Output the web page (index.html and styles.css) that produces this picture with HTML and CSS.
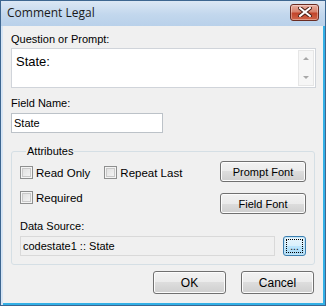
FILE: index.html
```html
<!DOCTYPE html>
<html lang="en">
<head>
    <meta charset="UTF-8">
    <title>Comment Legal</title>
    <link rel="stylesheet" href="styles.css">
</head>
<body>
    <div class="window">
        <div class="titlebar">
            <span class="title">Comment Legal</span>
            <span class="close">
                <svg width="14" height="10" viewBox="0 0 14 10">
                    <path d="M2 1 L12 9 M12 1 L2 9" stroke="#4a1e16" stroke-width="4" stroke-linecap="square"/>
                    <path d="M2 1 L12 9 M12 1 L2 9" stroke="#ffffff" stroke-width="2" stroke-linecap="square"/>
                </svg>
            </span>
        </div>

        <div class="client">
            <div class="label">Question or Prompt:</div>
            <div class="memo">
                <div class="memo-text">State:</div>
                <div class="vscroll">
                    <span class="arrow up"></span>
                    <span class="arrow down"></span>
                </div>
            </div>

            <div class="label field-label">Field Name:</div>
            <div class="textbox">State</div>

            <fieldset class="group">
                <legend>Attributes</legend>
                <div class="attrs">
                    <div class="checks">
                        <div class="check-row">
                            <label class="check"><span class="box"></span>Read Only</label>
                            <label class="check"><span class="box"></span>Repeat Last</label>
                        </div>
                        <div class="check-row">
                            <label class="check"><span class="box"></span>Required</label>
                        </div>
                    </div>
                    <div class="font-buttons">
                        <button class="btn font-btn">Prompt Font</button>
                        <button class="btn font-btn">Field Font</button>
                    </div>
                </div>
                <div class="label source-label">Data Source:</div>
                <div class="source-row">
                    <div class="textbox readonly">codestate1 :: State</div>
                    <button class="btn browse"><span class="focus">...</span></button>
                </div>
            </fieldset>

            <div class="actions">
                <button class="btn action">OK</button>
                <button class="btn action">Cancel</button>
            </div>
        </div>
    </div>
</body>
</html>
```

FILE: styles.css
```css
body {
    margin: 0;
    font-family: "Liberation Sans", Arial, sans-serif;
    font-size: 11px;
    color: #000;
}
.window {
    width: 326px;
    height: 306px;
    box-sizing: border-box;
    border: 1px solid #3d6690;
    padding: 0 2px 2px 2px;
    background: #f0f0f0;
    box-shadow: inset 2px 0 0 #d6e5f5, inset -2px -2px 0 #33b0e6;
    display: flex;
    flex-direction: column;
}
.titlebar {
    height: 25px;
    margin: 0 -2px;
    padding: 0 6px;
    display: flex;
    align-items: center;
    justify-content: space-between;
    background: linear-gradient(#dbe7f4, #c2d7ed 55%, #b9d1ea);
}
.title {
    font-family: "Open Sans", "Noto Sans", sans-serif;
    font-size: 12px;
    color: #1a1a1a;
    margin-top: -2px;
}
.close {
    width: 27px;
    height: 15px;
    margin-top: -3px;
    border: 1px solid #6a2c22;
    border-radius: 3px;
    background: linear-gradient(#eab0a2, #d7826d 45%, #c2452b 55%, #d0664a);
    box-shadow: inset 0 0 0 1px rgba(255, 255, 255, 0.35);
    display: flex;
    align-items: center;
    justify-content: center;
}
.client {
    flex: 1;
    padding: 7px 0 0 8px;
}
.label {
    line-height: 13px;
    height: 13px;
}
.memo {
    margin-top: 2px;
    width: 305px;
    height: 40px;
    box-sizing: border-box;
    border: 1px solid #d0d4da;
    background: #fff;
    display: flex;
}
.memo-text {
    flex: 1;
    padding: 5px 0 0 4px;
    font-size: 13px;
    line-height: 16px;
}
.vscroll {
    width: 16px;
    margin: 1px 1px 1px 0;
    background: #f6f6f6;
    border: 1px solid #e6e6e6;
    box-sizing: border-box;
    display: flex;
    flex-direction: column;
    align-items: center;
    justify-content: space-between;
    padding: 6px 0 6px;
}
.arrow {
    width: 0;
    height: 0;
    border-left: 3px solid transparent;
    border-right: 3px solid transparent;
}
.arrow.up {
    border-bottom: 3px solid #a8a8a8;
}
.arrow.down {
    border-top: 3px solid #a8a8a8;
}
.field-label {
    margin-top: 9px;
}
.textbox {
    margin-top: 3px;
    width: 152px;
    height: 20px;
    box-sizing: border-box;
    border: 1px solid #bcc2c8;
    background: #fff;
    padding: 0 2px;
    line-height: 18px;
}
.group {
    margin: 12px 0 0 0;
    width: 304px;
    box-sizing: border-box;
    border: 1px solid #d5dfe5;
    border-radius: 3px;
    padding: 3px 8px 8px 8px;
}
.group legend {
    padding: 0 1px;
    margin-left: 6px;
    line-height: 13px;
}
.attrs {
    display: flex;
    justify-content: space-between;
}
.checks {
    padding-top: 5px;
    display: flex;
    flex-direction: column;
    gap: 12px;
}
.check-row {
    display: flex;
    gap: 14px;
}
.check {
    display: flex;
    align-items: center;
    gap: 3px;
    height: 13px;
    font-size: 11.5px;
}
.box {
    width: 13px;
    height: 13px;
    box-sizing: border-box;
    border: 1px solid #8e8f8f;
    background: linear-gradient(135deg, #dcdcdc, #f8f8f8);
    box-shadow: inset 0 0 0 1px #f4f4f4, inset 0 0 0 2px #c9c9c9;
}
.font-buttons {
    display: flex;
    flex-direction: column;
    gap: 11px;
}
.btn {
    font-family: "Liberation Sans", Arial, sans-serif;
    font-size: 11px;
    color: #000;
    padding: 0;
    border: 1px solid #707070;
    border-radius: 3px;
    background: linear-gradient(#f2f2f2, #ebebeb 50%, #dddddd 50%, #cfcfcf);
    box-shadow: inset 0 0 0 1px #fcfcfc;
}
.font-btn {
    width: 86px;
    height: 21px;
}
.source-label {
    margin-top: 6px;
}
.source-row {
    display: flex;
    justify-content: space-between;
    align-items: center;
    margin-top: 3px;
}
.source-row .textbox {
    margin-top: 0;
    width: 255px;
    background: #f0f0f0;
    border-color: #d9d9d9;
}
.browse {
    width: 23px;
    height: 20px;
    border-color: #3c7fb1;
    background: linear-gradient(#eaf6fd, #d9f0fc 50%, #bee6fd 50%, #a7d9f5);
    box-shadow: inset 0 0 0 1px #c4e5f6;
    display: flex;
    align-items: center;
    justify-content: center;
}
.focus {
    width: 17px;
    height: 14px;
    box-sizing: border-box;
    border: 1px dotted #000;
    line-height: 10px;
    font-size: 10px;
    display: flex;
    justify-content: center;
    align-items: flex-end;
}
.actions {
    display: flex;
    justify-content: flex-end;
    gap: 15px;
    margin-top: 6px;
    padding-right: 9px;
}
.action {
    width: 73px;
    height: 23px;
    font-size: 12px;
}
```
